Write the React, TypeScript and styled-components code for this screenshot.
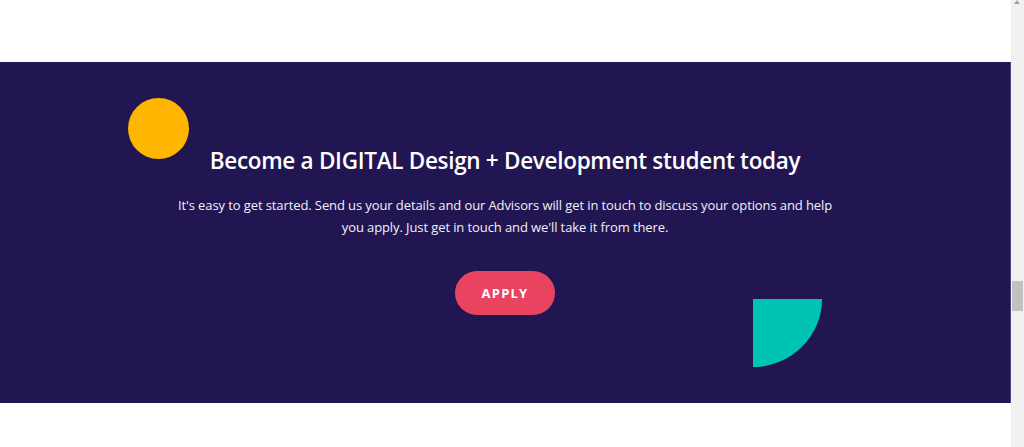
import React from "react";
import styled, { createGlobalStyle } from "styled-components";

const Global = createGlobalStyle`
  html, body { margin: 0; padding: 0; background: #fff; overflow: hidden; }
  * { box-sizing: border-box; }
`;

const Frame = styled.div`
  display: flex;
  width: 1024px;
  height: 447px;
`;

const Page = styled.main`
  flex: 1;
  display: flex;
  flex-direction: column;
  background: #fff;
`;

const Spacer = styled.div<{ h: number }>`
  height: ${(p) => p.h}px;
  flex: none;
`;

const Band = styled.section`
  position: relative;
  height: 341px;
  background: #211651;
  border-right: 1px solid #4a4280;
  display: flex;
  flex-direction: column;
  align-items: center;
  padding-top: 84px;
  font-family: "Open Sans", "Noto Sans", sans-serif;
  color: #fff;
`;

const Title = styled.h2`
  margin: 0;
  font-family: "Open Sans", sans-serif;
  font-size: 22.5px;
  font-weight: 600;
  line-height: 30px;
  letter-spacing: -0.3px;
`;

const Text = styled.p`
  margin: 18px 0 0;
  width: 664px;
  text-align: center;
  font-size: 13px;
  letter-spacing: -0.1px;
  line-height: 22px;
  color: #f2f0f8;
`;

const Apply = styled.button`
  margin-top: 33px;
  width: 100px;
  height: 44px;
  border: none;
  border-radius: 22px;
  background: #e8445f;
  color: #fff;
  font-family: "Open Sans", sans-serif;
  font-weight: 700;
  font-size: 13px;
  letter-spacing: 1.2px;
  cursor: pointer;
`;

const Circle = styled.div`
  position: absolute;
  left: 128px;
  top: 36px;
  width: 61px;
  height: 61px;
  border-radius: 50%;
  background: #ffb600;
`;

const Quarter = styled.div`
  position: absolute;
  left: 753px;
  top: 237px;
  width: 69px;
  height: 68px;
  background: #00c4b3;
  border-bottom-right-radius: 100%;
`;

const Scrollbar = styled.div`
  position: relative;
  width: 13px;
  background: #f1f1f1;
`;

const Arrow = styled.div`
  position: absolute;
  top: 0;
  left: 3px;
  width: 0;
  height: 0;
  border-left: 3.5px solid transparent;
  border-right: 3.5px solid transparent;
  border-bottom: 4px solid #a3a3a3;
`;

const Thumb = styled.div`
  position: absolute;
  top: 281px;
  left: 1px;
  width: 11px;
  height: 30px;
  background: #c1c1c1;
`;

export default function App() {
  return (
    <Frame>
      <Global />
      <Page>
        <Spacer h={62} />
        <Band>
          <Circle />
          <Quarter />
          <Title>Become a DIGITAL Design + Development student today</Title>
          <Text>
            It's easy to get started. Send us your details and our Advisors will get in touch to
            discuss your options and help you apply. Just get in touch and we'll take it from there.
          </Text>
          <Apply>APPLY</Apply>
        </Band>
        <Spacer h={44} />
      </Page>
      <Scrollbar>
        <Arrow />
        <Thumb />
      </Scrollbar>
    </Frame>
  );
}
